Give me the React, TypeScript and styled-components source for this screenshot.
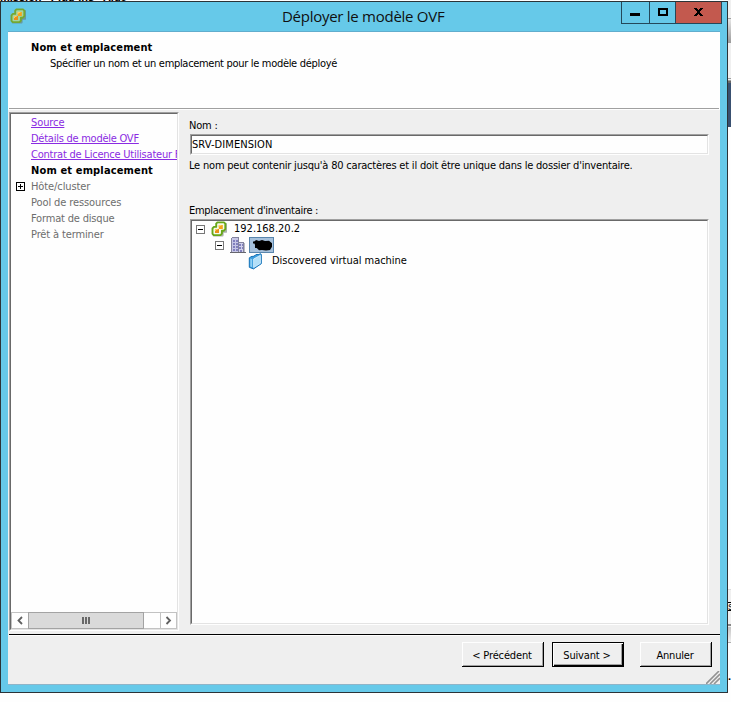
import React from 'react';
import styled, { createGlobalStyle } from 'styled-components';

const Global = createGlobalStyle`
  *{box-sizing:border-box}
  html,body{margin:0;height:702px;overflow:hidden;background:#fefefe}
`;

const Desktop = styled.div`
  position: relative; width: 731px; height: 702px; overflow: hidden; background: #fefefe;
  padding-top: 1px; display: flex; align-items: flex-start;
`;
const Behind = styled.svg`position: absolute; left: 0; top: 0;`;
const BehindText = styled.div<{ $x: number; $y: number; $size: number; $light?: boolean }>`
  position: absolute; left: ${p => p.$x}px; top: ${p => p.$y}px;
  font: ${p => (p.$light ? 'normal' : 'bold')} ${p => p.$size}px/12px "Liberation Sans", sans-serif; color: #000; white-space: pre;
`;
const Window = styled.div`
  position: relative; width: 728px; height: 692px; border: 1px solid #2b3337; background: #66c9e9;
  padding: 0 7px; display: flex; flex-direction: column;
`;
const TitleBar = styled.div`
  height: 30px; display: flex; align-items: flex-start; border-bottom: 1px solid #61adcd;
  svg { flex: none; }
`;
const Title = styled.div`
  flex: 1; padding: 4px 0 0 256px; height: 29px; white-space: nowrap;
  font: 15px/20px "Open Sans", sans-serif; letter-spacing: -.27px; color: #101010;
`;
const CaptionButtons = styled.div`
  display: flex; height: 22px; margin-right: -2px; border: 1px solid #24485a; border-top: 0; flex: none;
`;
const CaptionButton = styled.div<{ $w: number; $close?: boolean }>`
  width: ${p => p.$w}px; height: 21px; background: ${p => (p.$close ? '#c3594e' : '#66c9e9')};
  & + & { border-left: 1px solid #24485a; }
  svg { display: block; }
`;
const Client = styled.div`
  width: 712px; height: 653px; background: #efefef; display: flex; flex-direction: column;
  border-bottom: 1px solid #8fb4c8;
`;
const Header = styled.div`
  height: 78px; background: #fefefe; padding: 8px 0 0 23px; position: relative; flex: none;
  &::after { content: ''; position: absolute; left: 1px; right: 1px; bottom: 1px; height: 1px; background: #a0a0a0; }
`;
const Text = styled.div<{ $bold?: boolean; $color?: string; $ls?: number; $ml?: number; $link?: boolean }>`
  font: ${p => (p.$bold ? 'bold' : 'normal')} 11px/16px "DejaVu Sans Condensed", "DejaVu Sans", sans-serif;
  font-stretch: condensed;
  letter-spacing: ${p => p.$ls ?? 0}px; color: ${p => p.$color ?? '#000'}; margin-left: ${p => p.$ml ?? 0}px;
  white-space: nowrap; width: max-content;
  text-decoration: ${p => (p.$link ? 'underline' : 'none')}; text-underline-offset: 1px; text-decoration-thickness: 1px;
`;
const Body = styled.div`height: 524px; padding: 2px 0 0 1px; display: flex; align-items: flex-start; flex: none;`;
const Sunken = styled.div<{ $w: number; $h: number }>`
  width: ${p => p.$w}px; height: ${p => p.$h}px; flex: none; border: 1px solid; border-color: #a0a0a0 #fefefe #fefefe #a0a0a0;
  display: flex;
`;
const SunkenInner = styled.div<{ $pt?: number }>`
  flex: 1; min-width: 0; border: 1px solid; border-color: #696969 #e3e3e3 #e3e3e3 #696969;
  background: #fefefe; overflow: hidden; display: flex; flex-direction: column; padding-top: ${p => p.$pt ?? 0}px;
`;
const Steps = styled.div`flex: 1;`;
const Step = styled.div`height: 16px; display: flex; align-items: center;`;
const StepMark = styled.div`width: 20px; padding-left: 5px; flex: none; display: flex; margin-top: -2px;`;
const ScrollBar = styled.div`height: 17px; width: 166px; display: flex; background: #fefefe; border: 1px solid #c2c2c2;`;
const ScrollArrow = styled.div<{ $right?: boolean }>`
  width: 16px; height: 15px; flex: none; ${p => p.$right && 'border-left: 1px solid #c2c2c2; margin-left: auto;'}
  svg { display: block; }
`;
const Thumb = styled.div`
  width: 116px; height: 17px; margin-top: -1px; background: #dadada; border: 1px solid #a3a3a3;
  display: flex; gap: 1px; justify-content: center; align-items: center; flex: none;
`;
const Grip = styled.i`width: 2px; height: 7px; background: #686868;`;
const Form = styled.div`margin-left: 11px; width: 519px;`;
const Gap = styled.div<{ $h: number }>`height: ${p => p.$h}px;`;
const TreeRow = styled.div<{ $x: number; $gap?: number }>`
  height: 16px; display: flex; align-items: center; padding-left: ${p => p.$x}px; gap: ${p => p.$gap ?? 0}px;
  svg { flex: none; }
`;
const Selected = styled.div`
  width: 25px; height: 16px; margin-left: -3px; background: #a6c1dc; border: 1px solid #5a86ad; svg { display: block; }
`;
const Footer = styled.div`
  position: relative; flex: 1; border-top: 1px solid #000; margin-left: 1px; box-shadow: inset 0 1px #fefefe;
  display: flex; align-items: flex-start; padding: 7px 0 0 453px;
`;
const Button = styled.div<{ $w: number; $ml?: number; $default?: boolean }>`
  width: ${p => p.$w}px; height: 25px; margin-left: ${p => p.$ml ?? 0}px; flex: none; padding-top: 2px;
  ${p => (p.$default
    ? 'border: 1px solid #000; box-shadow: inset 1px 1px #fefefe, inset -1px -1px #000, inset -2px -2px #a0a0a0;'
    : 'box-shadow: inset -1px -1px #000, inset 1px 1px #fefefe, inset -2px -2px #a0a0a0;')}
  display: flex; align-items: center; justify-content: center;
`;
const ResizeGrip = styled.svg`position: absolute; right: 0; bottom: 0;`;

const VCenterIcon = ({ soft }: { soft?: boolean }) => (
  <svg width="16" height="16" viewBox="0 0 16 16">
    <path d="M6 2.2h8.2v7.5h-3.5v3.7H2.2V6.2H6Z" transform="translate(.7 .9)" fill="none" stroke="#66716a" strokeWidth="2.4" strokeLinejoin="round" opacity=".55" />
    <path d="M6.4 1.4h6.6l1.3 1.2v5.6l-1.4 1.5h-2v3l-1.4 1.4H2.8l-1.3-1.3V7.4l1.4-1.5h2.3V2.6Z" fill={soft ? '#a5d4a0' : '#f5fbe9'} stroke={soft ? '#74a832' : '#67a718'} strokeWidth="1.9" strokeLinejoin="round" />
    <rect x="7.8" y="4" width="4" height="4" fill="#f4a41b" />
    <rect x="4" y="8" width="4" height="4" fill="#e9901a" />
    <path d="M8 6V4.4h2.4M4.4 10V8.4h2.2" fill="none" stroke="#ffd56b" />
  </svg>
);
const Expander = ({ plus, dark }: { plus?: boolean; dark?: boolean }) => (
  <svg width="9" height="9" shapeRendering="crispEdges">
    <rect x=".5" y=".5" width="8" height="8" fill="#fff" stroke={dark ? '#000' : '#777'} />
    <path d={plus ? 'M2 4.5h5M4.5 2v5' : 'M2 4.5h5'} stroke="#000" />
  </svg>
);
const Datacenter = () => (
  <svg width="16" height="16" shapeRendering="crispEdges">
    <path d="M1.5 15V1.5L3 .5h5.5V15" fill="#c6c6e6" stroke="#84849f" />
    <path d="M8.5 15V5.5h5V15" fill="#d0d0ea" stroke="#84849f" />
    <path d="M3 3h2v2H3zM6 3h2v2H6zM3 6h2v2H3zM6 6h2v2H6zM3 9h2v2H3zM6 9h2v2H6zM3 12h2v2H3zM6 12h2v2H6zM9 7h2v2H9zM12 7h1v2h-1zM9 10h2v2H9zM12 10h1v2h-1zM10 13h2v2h-2z" fill="#8180bd" />
    <path d="M0 15.5h16" stroke="#66666e" /><path d="M14.5 6v9" stroke="#bcbcc4" />
  </svg>
);
const Folder = () => (
  <svg width="15" height="17" viewBox="0 0 15 17">
    <path d="M1.3 4.8 4 3.2l1 .4L9 1.2l1 .6 2.7-1.1.6.8v9.2L5.5 15.9l-4.2-1.6Z" fill="#3d9ede" stroke="#1673b8" strokeLinejoin="round" />
    <path d="M2.3 5.6v7.9l1.8.8V6.2Z" fill="#8fd0f5" />
    <path d="m5.6 6 6.8-3.7v8L5.6 14.6Z" fill="#b2dff8" stroke="#e9f8ff" strokeWidth=".7" />
  </svg>
);
const Scribble = () => (
  <svg width="23" height="14">
    <path d="M4 4 6 2l3 1 3-1 3 1 4-.2 3 2.5v3.5L20 12l-4 .5-4-.5-3 .3-2-2L5 9.5 5 7Z" fill="#000" />
    <path d="M3 4.5h15M5 9l15-1" stroke="#000" strokeWidth="2" />
  </svg>
);

const steps: { label: string; kind: 'link' | 'current' | 'todo'; ls: number; plus?: boolean }[] = [
  { label: 'Source', kind: 'link', ls: -0.1 },
  { label: 'Détails de modèle OVF', kind: 'link', ls: -0.25 },
  { label: 'Contrat de Licence Utilisateur Final', kind: 'link', ls: -0.22 },
  { label: 'Nom et emplacement', kind: 'current', ls: 0.15 },
  { label: 'Hôte/cluster', kind: 'todo', ls: -0.1, plus: true },
  { label: 'Pool de ressources', kind: 'todo', ls: -0.1 },
  { label: 'Format de disque', kind: 'todo', ls: -0.18 },
  { label: 'Prêt à terminer', kind: 'todo', ls: -0.13 },
];
const stepColor = { link: '#8a2be2', current: '#000', todo: '#6d6d6d' };

export default function App() {
  return (
    <Desktop>
      <Global />
      <Behind width="731" height="702" shapeRendering="crispEdges">
        <defs>
          <linearGradient id="bar" x1="0" y1="0" x2="0" y2="1"><stop offset="0" stopColor="#e6e6e6" /><stop offset="1" stopColor="#9a9a9a" /></linearGradient>
          <linearGradient id="bar2" x1="0" y1="0" x2="0" y2="1"><stop offset="0" stopColor="#c4c4c4" /><stop offset="1" stopColor="#f0f0f0" /></linearGradient>
        </defs>
        <path d="M728 0h3v83h-3z" fill="#f0f0f0" />
        <path d="M728 18h3v1h-3zM728 78h3v1h-3z" fill="#a0a0a0" />
        <path d="M728 19h3v24h-3z" fill="url(#bar)" />
        <path d="M728 80h3v1h-3z" fill="#a0a0a0" />
        <path d="M728 81h3v2h-3z" fill="#696969" />
        <path d="M728 83h3v44h-3z" fill="#395070" />
        <path d="M728 590h3v37h-3z" fill="#f0f0f0" />
        <path d="M728 589h3v1h-3z" fill="#dcdcdc" />
        <path d="M728 602h3v1h-3zM728 610h3v1h-3z" fill="#000" />
        <path d="M728 624h3v2h-3z" fill="#888" />
        <path d="M728 627h3v15h-3z" fill="url(#bar2)" />
        <path d="M728 642h3v1h-3z" fill="#b0b0b0" />
      </Behind>
      <BehindText $x={0} $y={-9} $size={11}>mission   Plug-ins   Aide</BehindText>
      <BehindText $x={728} $y={601} $size={9} $light>S</BehindText>
      <BehindText $x={728} $y={670} $size={11}>.</BehindText>
      <Window>
        <TitleBar>
          <svg width="18" height="29"><g transform="translate(2 6)"><VCenterIcon soft /></g></svg>
          <Title>Déployer le modèle OVF</Title>
          <CaptionButtons>
            <CaptionButton $w={27}><svg width="27" height="21"><path d="M8 11h10v3H8z" /></svg></CaptionButton>
            <CaptionButton $w={26}><svg width="25" height="21"><path fillRule="evenodd" d="M8 6h10v8H8zM10 8v4h6V8z" /></svg></CaptionButton>
            <CaptionButton $w={46} $close>
              <svg width="45" height="21" shapeRendering="crispEdges"><path d="M18 6h3v1h1v1h1V7h1V6h3v1h-1v1h-1v1h-1v2h1v1h1v1h1v1h-3v-1h-1v-1h-1v1h-1v1h-3v-1h1v-1h1v-1h1V9h-1V8h-1V7h-1z" /></svg>
            </CaptionButton>
          </CaptionButtons>
        </TitleBar>
        <Client>
          <Header>
            <Text $bold $ls={0.12}>Nom et emplacement</Text>
            <Text $ml={19} $ls={-0.31}>Spécifier un nom et un emplacement pour le modèle déployé</Text>
          </Header>
          <Body>
            <Sunken $w={170} $h={519}>
              <SunkenInner $pt={1}>
                <Steps>
                  {steps.map(s => (
                    <Step key={s.label}>
                      <StepMark>{s.plus && <Expander plus dark />}</StepMark>
                      <Text $bold={s.kind === 'current'} $link={s.kind === 'link'} $color={stepColor[s.kind]} $ls={s.ls}>{s.label}</Text>
                    </Step>
                  ))}
                </Steps>
                <ScrollBar>
                  <ScrollArrow><svg width="16" height="15"><path d="M10 4 6.5 7.5 10 11" fill="none" stroke="#606060" strokeWidth="1.8" /></svg></ScrollArrow>
                  <Thumb><Grip /><Grip /><Grip /></Thumb>
                  <ScrollArrow $right><svg width="15" height="15"><path d="m5.5 4 3.5 3.5L5.5 11" fill="none" stroke="#606060" strokeWidth="1.8" /></svg></ScrollArrow>
                </ScrollBar>
              </SunkenInner>
            </Sunken>
            <Form>
              <Gap $h={6} />
              <Text $ml={-1} $ls={-0.2}>Nom :</Text>
              <Sunken $w={519} $h={21}><SunkenInner $pt={1}><Text $ls={0.08}>SRV-DIMENSION</Text></SunkenInner></Sunken>
              <Gap $h={3} />
              <Text $ml={-1} $ls={-0.2}>Le nom peut contenir jusqu'à 80 caractères et il doit être unique dans le dossier d'inventaire.</Text>
              <Gap $h={29} />
              <Text $ml={-1} $ls={-0.3}>Emplacement d'inventaire :</Text>
              <Sunken $w={519} $h={406}>
                <SunkenInner>
                  <TreeRow $x={4} $gap={6}><Expander /><VCenterIcon /><Text $ml={1}>192.168.20.2</Text></TreeRow>
                  <TreeRow $x={23} $gap={6}><Expander /><Datacenter /><Selected><Scribble /></Selected></TreeRow>
                  <TreeRow $x={56}><Folder /><Text $ml={9} $ls={-0.03}>Discovered virtual machine</Text></TreeRow>
                </SunkenInner>
              </Sunken>
            </Form>
          </Body>
          <Footer>
            <Button $w={82}><Text $ml={-2} $ls={-0.15}>&lt; Précédent</Text></Button>
            <Button $w={72} $ml={8} $default><Text $ml={-2} $ls={-0.15}>Suivant &gt;</Text></Button>
            <Button $w={72} $ml={16}><Text $ml={-2} $ls={-0.2}>Annuler</Text></Button>
            <ResizeGrip width="14" height="13"><path d="M0 13 13 0M4 13 14 3M8 13l6-6" stroke="#929292" strokeWidth="1.6" /></ResizeGrip>
          </Footer>
        </Client>
      </Window>
    </Desktop>
  );
}
